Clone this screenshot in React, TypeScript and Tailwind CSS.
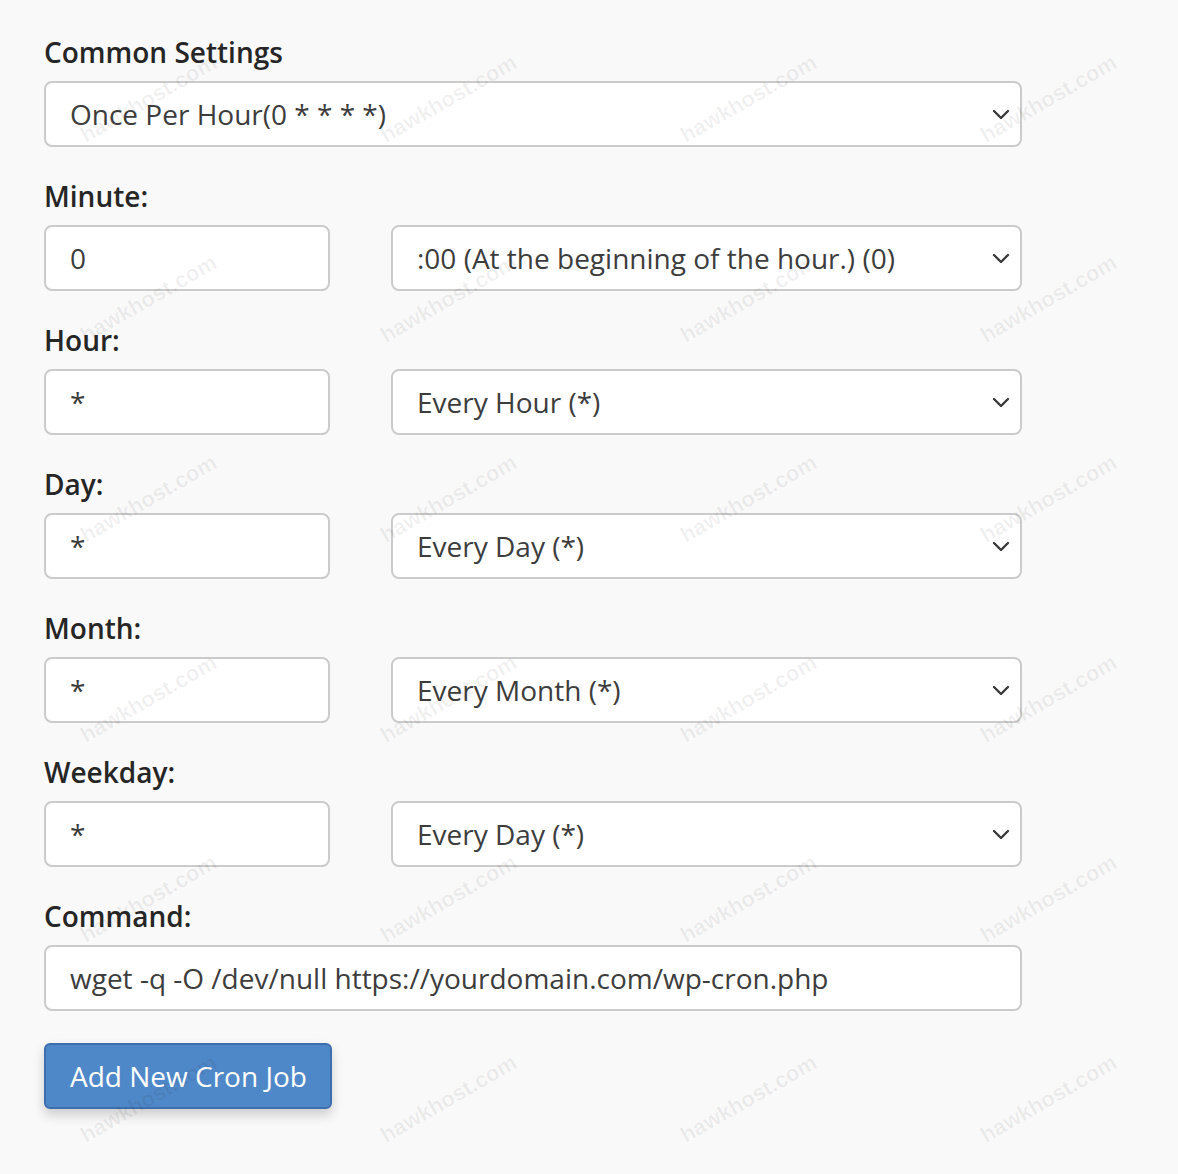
import React from "react";

const marks = Array.from({ length: 24 });

const Chevron = () => (
  <svg
    className="pointer-events-none absolute right-[12px] top-1/2 -translate-y-1/2"
    width="18"
    height="12"
    viewBox="0 0 18 12"
    fill="none"
  >
    <path d="M2 3l7 7 7-7" stroke="#3a3a3a" strokeWidth="2.4" strokeLinecap="round" strokeLinejoin="round" />
  </svg>
);

const SelectBox = ({ value, className }: { value: string; className: string }) => (
  <div className={`relative ${className}`}>
    <select
      defaultValue={value}
      className="h-[66px] w-full appearance-none rounded-[8px] border-2 border-[#cbcbcb] bg-white pl-[24px] pr-[44px] text-[28px] text-[#3d3d3d] outline-none"
    >
      <option>{value}</option>
    </select>
    <Chevron />
  </div>
);

const TextBox = ({ value, className }: { value: string; className: string }) => (
  <input
    defaultValue={value}
    className={`h-[66px] rounded-[8px] border-2 border-[#cbcbcb] bg-white px-[24px] text-[28px] text-[#3d3d3d] outline-none ${className}`}
  />
);

const Label = ({ children }: { children: React.ReactNode }) => (
  <label className="mb-[9px] block h-[40px] text-[28px] font-semibold leading-[40px] text-[#262626]">
    {children}
  </label>
);

const fields = [
  { label: "Minute:", value: "0", option: ":00 (At the beginning of the hour.) (0)" },
  { label: "Hour:", value: "*", option: "Every Hour (*)" },
  { label: "Day:", value: "*", option: "Every Day (*)" },
  { label: "Month:", value: "*", option: "Every Month (*)" },
  { label: "Weekday:", value: "*", option: "Every Day (*)" },
];

export default function App() {
  return (
    <div className="relative min-h-[1174px] w-full overflow-hidden bg-[#f9f9f9] font-['Open_Sans',sans-serif]">
      <form className="ml-[44px] w-[978px] pt-[32px]">
        <Label>Common Settings</Label>
        <div className="mb-[29px]">
          <SelectBox value="Once Per Hour(0 * * * *)" className="w-full" />
        </div>

        {fields.map((f) => (
          <div key={f.label} className="mb-[29px]">
            <Label>{f.label}</Label>
            <div className="flex gap-[61px]">
              <TextBox value={f.value} className="w-[286px]" />
              <SelectBox value={f.option} className="flex-1" />
            </div>
          </div>
        ))}

        <Label>Command:</Label>
        <TextBox value="wget -q -O /dev/null https://yourdomain.com/wp-cron.php" className="w-full" />

        <button
          type="button"
          className="mt-[32px] h-[66px] w-[288px] rounded-[6px] border-2 border-[#3d6fb0] bg-[#4f88c8] pl-[24px] text-left text-[28px] text-white shadow-[0_6px_12px_rgba(0,0,0,0.18)]"
        >
          Add New Cron Job
        </button>
      </form>

      {/* watermark overlay */}
      <div className="pointer-events-none absolute left-[-2px] top-[-2px] grid grid-cols-[repeat(4,300px)] auto-rows-[200px]">
        {marks.map((_, i) => (
          <div key={i} className="flex items-center justify-center">
            <span className="-rotate-30 whitespace-nowrap font-['Liberation_Sans',sans-serif] text-[22px] font-bold text-black/[0.06]">
              hawkhost.com
            </span>
          </div>
        ))}
      </div>
    </div>
  );
}
